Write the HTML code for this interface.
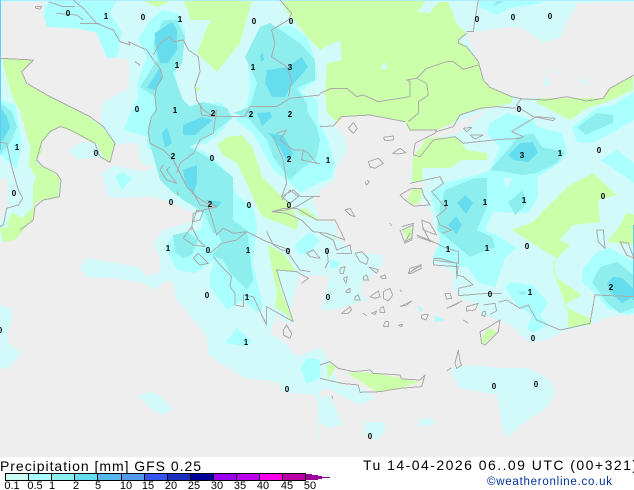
<!DOCTYPE html>
<html><head><meta charset="utf-8"><title>Precipitation</title>
<style>html,body{margin:0;padding:0;background:#fff;width:634px;height:490px;overflow:hidden}svg{display:block}
.c polyline{fill:none;stroke:#aaa;stroke-width:3;stroke-linejoin:round;shape-rendering:crispEdges}
.l text{font:bold 8px "Liberation Sans",sans-serif;fill:#000;text-anchor:middle}
.b text{font:11px "Liberation Sans",sans-serif;fill:#000;text-anchor:middle}
</style></head><body>
<svg width="634" height="490" viewBox="0 0 634 490" xmlns="http://www.w3.org/2000/svg">
<rect width="634" height="490" fill="#fff"/>
<g shape-rendering="crispEdges">
<rect width="634" height="457" fill="#d2fafa"/>
<g fill="#eeeeee">
<polygon points="2,2 43,2 46,27 95,30 103,52 117,58 129,60 129,88 102,103 100,125 87,116 50,97 27,83 22,72 33,60 2,58"/>
<polygon points="0,180 7,178 8,205 0,223"/>
<polygon points="60,127 70,130 93,143 97,157 110,162 115,145 137,142 140,162 153,167 143,172 115,165 102,173 107,195 117,198 137,197 150,196 170,202 192,212 192,222 163,230 153,243 160,258 160,272 147,277 138,267 88,258 80,267 87,277 113,278 143,283 155,290 167,280 173,283 175,297 200,328 207,338 208,355 240,375 247,379 263,380 277,382 283,392 317,395 320,457 0,457 0,242 13,240 23,227 33,220 35,202 50,198 60,198 62,180 45,168 37,158 42,140"/>
<polygon points="466,33 507,27 523,28 543,43 560,38 568,20 578,3 634,2 634,75 610,88 603,98 523,98 512,97 487,87 477,60"/>
<polygon points="634,457 320,457 320,392 327,388 345,398 360,405 375,398 360,387 340,385 327,358 320,347 297,357 287,345 270,332 277,313 280,320 295,325 290,310 300,275 330,276 327,287 322,307 323,311 340,308 368,300 360,292 363,282 383,265 382,255 355,252 337,238 335,223 320,220 313,200 320,190 335,180 335,170 347,150 345,137 335,125 342,117 370,115 407,122 408,130 437,130 463,120 490,108 470,125 455,135 445,135 430,140 413,157 410,183 427,182 420,197 432,213 433,225 440,238 433,258 430,262 453,272 453,288 460,298 477,305 483,315 500,320 513,327 520,335 530,342 547,340 567,330 590,325 607,317 634,315"/>
</g>
<g fill="#d2fafa">
<polygon points="68,150 80,142 93,143 97,158 77,159"/>
<polygon points="138,395 152,392 163,398 173,410 162,415 148,407"/>
<polygon points="0,305 10,308 13,318 7,335 7,342 22,353 8,369 0,368"/>
<polygon points="320,398 330,395 342,425 327,428 320,422"/>
<polygon points="365,422 383,422 386,433 375,440 365,433"/>
<polygon points="418,420 433,418 435,425 420,426"/>
<polygon points="450,372 460,388 497,395 502,428 508,437 520,425 547,408 555,392 550,380 527,368 500,368 467,365 452,368"/>
<polygon points="545,75 550,85 543,87"/><polygon points="583,80 590,83 585,85"/>
<polygon points="553,70 560,72 555,74"/><polygon points="578,80 583,78 585,84"/>
</g>
<g fill="#ccffaa">
<polygon points="3,58 33,60 22,72 27,83 50,97 77,110 100,125 115,143 110,162 103,157 97,143 93,143 68,130 60,127 50,133 42,143 42,153 36,158 38,165 48,168 60,178 58,198 35,202 33,220 23,227 13,238 15,240 7,223 12,212 22,218 33,207 33,187 36,178 29,165 30,147 20,110 15,102 10,90 3,63"/>
<polygon points="0,228 28,225 15,240 3,242"/>
<polygon points="183,0 252,0 240,43 217,72 197,53 207,27 212,20 190,20 188,10"/>
<polygon points="143,0 173,0 157,7"/>
<polygon points="282,0 427,0 417,12 430,13 438,2 448,2 453,13 457,25 467,33 458,40 467,47 477,60 483,80 490,87 512,97 512,103 493,107 463,113 453,123 437,130 410,131 405,122 370,115 342,117 337,123 327,113 325,93 327,63 342,60 340,40 330,50 320,50 307,37 297,23 287,13"/>
<polygon points="537,98 603,98 610,88 633,75 633,90 607,102 587,108 570,120 557,113 537,103"/>
<polygon points="443,137 427,138 413,157 412,182 423,180 422,168 450,168 462,160 487,160 487,153 467,150 457,138"/>
<polygon points="407,200 413,188 422,188 420,203 412,205"/>
<polygon points="402,230 413,227 413,235 408,240"/>
<polygon points="512,230 533,222 547,207 567,187 593,173 617,195 598,200 600,222 573,225 560,240 570,245 553,263 557,278 582,295 563,305 577,313 590,318 592,325 568,327 568,312 560,290 553,270 557,258 540,248 520,235"/>
<polygon points="627,212 634,215 634,245 607,242 620,225"/>
<polygon points="488,328 497,332 483,345 482,338"/>
<polygon points="347,373 377,392 400,388 420,382 400,378 373,373 360,372"/>
<polygon points="327,365 337,365 328,380"/>
<polygon points="217,145 227,137 242,135 253,148 258,163 262,177 280,195 290,205 298,220 297,230 280,223 263,217 257,207 250,190 237,163 223,155"/>
<polygon points="297,210 305,208 320,220 308,217 300,215"/>
<polygon points="268,245 278,250 285,255 297,272 278,270 280,287 293,322 285,313 275,307 277,293 272,270"/>
<polygon points="333,235 338,242 335,240"/>
<polygon points="195,87 201,88 197,92"/>
</g>
<polygon points="385,62 380,69 388,69" fill="#d2fafa"/>
<polygon points="327,46 340,40 342,60 327,63 320,50" fill="#d2fafa"/>
<g fill="#aaffff">
<polygon points="50,0 117,0 110,13 122,32 117,57 107,58 97,33 77,28 47,27 43,13"/>
<polygon points="0,100 15,105 22,143 17,170 12,165 0,155"/>
<polygon points="162,10 178,13 185,30 185,43 175,73 183,107 202,103 220,102 233,117 220,133 207,143 190,145 213,157 232,177 235,193 243,200 253,207 257,225 256,233 253,263 263,307 257,313 243,300 227,310 210,287 210,273 215,260 195,273 177,270 165,248 172,236 185,232 200,230 203,220 200,208 178,193 163,180 170,167 147,147 147,137 123,130 138,97 137,83 147,57 138,40 150,20"/>
<polygon points="268,28 290,25 307,37 315,60 317,80 300,92 318,100 318,125 320,123 328,140 335,165 332,178 320,182 300,193 287,180 273,170 253,133 235,120 247,105 250,90 247,53 263,33"/>
<polygon points="490,123 507,113 533,120 537,127 562,133 567,153 560,163 538,177 538,197 528,213 493,212 485,230 497,235 517,248 505,258 495,287 480,283 467,267 457,267 433,258 440,242 437,225 437,217 430,193 443,183 477,175 490,170 500,147 487,133"/>
<polygon points="572,127 577,142 593,143 613,132 634,120 634,92 613,105 597,108"/>
<polygon points="600,160 617,150 634,163 634,183 620,173"/>
<polygon points="505,288 510,282 533,285 548,303 540,315 548,325 533,333 527,328 532,315 517,305"/>
<polygon points="583,268 582,282 597,295 607,308 627,315 634,313 634,262 610,248 597,252"/>
<polygon points="330,260 340,262 337,268 330,268"/>
<polygon points="300,240 310,232 320,240 307,255 297,253 295,245"/>
<polygon points="225,343 237,328 253,342 247,346"/>
<polygon points="115,177 123,172 132,178 122,190"/>
<polygon points="300,368 308,358 320,360 320,378 307,384"/>
<polygon points="478,0 480,7 497,15 510,8 533,5 543,2 543,0"/>
<polygon points="418,305 423,310 420,312"/><polygon points="435,315 445,320 435,322"/>
</g>
<g fill="#8eeeee">
<polygon points="140,87 157,60 153,43 163,20 177,20 185,37 182,63 173,73 183,100 190,107 203,102 227,108 232,118 213,133 190,147 207,157 233,177 233,220 247,230 248,237 253,280 247,290 230,273 223,260 212,255 222,243 217,233 213,233 205,213 183,200 170,190 160,180 147,133 155,110 155,97"/>
<polygon points="173,235 187,232 198,240 192,255 183,258 175,252"/>
<polygon points="245,57 260,27 270,23 300,43 315,60 315,80 297,88 307,103 308,113 317,127 320,140 317,157 300,170 290,180 273,157 267,140 248,118 233,113 250,107 257,83"/>
<polygon points="490,170 510,147 517,137 533,133 542,147 565,152 557,163 537,173 522,175 505,172"/>
<polygon points="445,190 475,178 487,178 487,207 477,230 492,237 495,247 470,257 453,243 437,230 440,207"/>
<polygon points="508,202 523,190 527,203 515,215"/>
<polygon points="577,127 597,113 613,115 613,123 585,135"/>
<polygon points="0,102 12,112 17,127 10,143 0,155"/>
<polygon points="592,282 600,267 617,262 634,275 634,308 620,313 607,303"/>
<polygon points="492,7 497,0 507,0"/>
<polygon points="517,292 527,291 523,295"/>
</g>
<polygon points="300,172 312,172 307,178" fill="#aaffff"/>
<polygon points="503,178 513,178 507,188" fill="#d2fafa"/>
<g fill="#66ddee">
<polygon points="155,33 172,22 177,30 177,50 168,63 160,63 155,43"/>
<polygon points="147,88 160,67 162,80 155,90"/>
<polygon points="183,125 202,117 213,120 203,128 195,135 183,135"/>
<polygon points="162,133 167,127 172,143 165,148"/>
<polygon points="183,170 197,165 197,182 193,195 185,182"/>
<polygon points="208,200 222,202 217,208"/>
<polygon points="0,107 7,117 10,127 3,140 0,142"/>
<polygon points="267,70 287,67 302,57 308,67 290,88 285,97 272,97 265,83"/>
<polygon points="260,55 263,52 264,60 261,62"/>
<polygon points="257,113 270,112 272,117 262,126"/>
<polygon points="268,133 283,135 293,153 288,163 277,143"/>
<polygon points="508,155 520,143 533,142 538,153 528,162 513,160"/>
<polygon points="457,203 465,195 473,203 466,214"/>
<polygon points="448,225 456,216 462,225 456,234"/>
<polygon points="607,283 613,277 622,278 633,288 633,297 622,303 610,292"/>
</g>
<rect x="0" y="0" width="634" height="1" fill="#aaeeff"/>
<rect x="0" y="0" width="1" height="150" fill="#66ccee"/>
<rect x="633" y="225" width="1" height="75" fill="#66ccee"/>
</g>
<g class="c">
<g transform="scale(.3333)">
<polyline points="0,175 100,180 65,215 80,250 150,290 270,350 310,380 345,430 330,487 300,470 285,430 240,405 200,385 180,380 150,395 125,425 110,480 130,500 170,520 183,540 178,590 130,600 105,620 100,660 60,690"/>
<polyline points="220,0 250,25 290,70 340,90 360,125 390,135 385,125 440,150 460,180 480,205 488,230 470,260 465,290 470,330 455,350 445,390 450,430 490,450 520,480 540,520 560,560 590,590 620,610 650,620"/>
<polyline points="460,165 480,130 510,110 520,125 550,120 565,150 595,170 600,215 585,260 590,300 610,330 640,350 680,350 735,350 750,320 830,320 870,295 960,285"/>
<polyline points="840,0 875,40 865,60 815,90 825,130 815,170 860,200 875,240 865,290"/>
<polyline points="145,5 190,20 225,20"/><polyline points="170,40 230,45 250,60"/><polyline points="240,70 300,70"/><polyline points="105,20 125,20 120,27 108,25 105,20"/>
<polyline points="600,310 605,345 640,350 650,330 640,400 600,420 580,460 540,490 530,520"/>
<polyline points="830,400 860,390 840,420 880,450 910,450 925,460 950,490 960,490"/>
<polyline points="910,450 905,480 950,490"/>
<polyline points="820,410 850,480 860,550 845,590 880,570 900,590 960,590"/>
<polyline points="815,635 860,630 890,620 940,590"/>
<polyline points="490,495 480,510 500,540 530,550 500,510 510,500"/>
<polyline points="575,690 580,640 610,630 650,620 620,600"/>
<polyline points="405,185 420,195"/><polyline points="530,575 535,585"/>
</g>
<g transform="translate(0,110) scale(.3333)">
<polyline points="0,97 20,100 35,170 55,240 68,265 55,285 20,295 10,345 0,350"/>
</g>
<g transform="translate(150,190) scale(.3333)">
<polyline points="125,0 150,45 175,50 190,100 200,135 220,115 250,130 290,125 350,155 420,180 415,190 450,240 480,245"/>
<polyline points="180,190 215,160 260,150 290,125"/>
<polyline points="190,200 215,230 245,260 240,290 255,310 255,345 280,350 280,315 310,320 335,375 350,405 350,350 385,370 430,395 395,290 380,240 440,245 475,265 455,280"/>
<polyline points="130,95 140,60 160,65 150,90 130,95"/>
<polyline points="100,145 125,110 145,150 165,170 130,165 100,145"/>
<polyline points="130,205 145,190 175,220 150,225 130,205"/>
<polyline points="365,65 400,55 440,55 500,90 555,90 585,150 530,130 490,125 455,90 410,70 365,65"/>
<polyline points="350,125 370,165 395,180 420,185"/>
<polyline points="395,30 420,0 445,20 420,40 395,20"/>
<polyline points="470,190 490,180 510,205 480,200 470,190"/>
<polyline points="400,420 410,405 425,430 420,445 400,435 400,420"/>
</g>
<g transform="translate(320,225) scale(.3333)">
<polyline points="105,85 125,80 145,100 140,118 120,110 105,85"/><polyline points="145,125 175,135 170,145 145,125"/><polyline points="265,145 300,120 305,130 275,145 265,145"/>
<polyline points="60,130 75,125 70,145 60,145 60,130"/><polyline points="70,160 82,155 78,175 70,160"/><polyline points="80,195 90,190 90,203 78,203 80,195"/>
<polyline points="105,215 115,210 120,225 105,225 105,215"/><polyline points="130,155 140,150 145,165 130,165 130,155"/><polyline points="180,155 195,150 198,160 185,160 180,155"/>
<polyline points="65,265 90,245 95,255 85,265 65,265"/><polyline points="150,215 175,198 180,215 165,220 150,215"/><polyline points="190,200 210,190 218,210 205,228 190,220 190,200"/>
<polyline points="240,245 275,228 260,240 240,245"/><polyline points="180,250 190,245 195,262 180,262 180,250"/><polyline points="155,265 170,258 165,268 155,265"/><polyline points="128,265 140,272"/>
<polyline points="195,290 205,290 205,305 190,305 195,290"/><polyline points="235,300 248,298 245,305 235,300"/><polyline points="305,270 325,268 318,285 305,280 305,270"/><polyline points="430,285 445,295"/><polyline points="240,195 245,200"/>
<polyline points="375,205 390,205 395,220 380,222 375,205"/><polyline points="380,250 425,228 405,240 380,250"/><polyline points="440,245 475,235 465,255 440,258 440,245"/>
<polyline points="490,258 497,260 495,275 485,270 490,258"/><polyline points="490,240 525,235 530,258 510,268"/>
<polyline points="535,232 560,225 600,250 625,240 650,285 720,315 745,310 810,295 825,210 942,215"/>
<polyline points="415,190 415,212 500,205 545,205"/>
<polyline points="480,320 500,310 540,285 535,320 495,360 485,355 480,320"/>
<polyline points="405,415 415,375 420,410 425,420 410,430 405,415"/><polyline points="380,438 395,428"/>
<polyline points="0,420 30,410 55,430 100,440 150,435 160,445 240,450 245,462 300,465 315,450 305,485 240,490 180,500 120,502 115,480 65,475 0,460"/>
<polyline points="35,512 38,520"/>
<polyline points="0,25 40,45 50,75 90,60 95,85 50,85"/><polyline points="20,70 25,110 15,130"/>
<polyline points="245,15 280,0 275,40 255,50 270,25"/><polyline points="310,10 330,50"/><polyline points="290,30 340,50"/>
<polyline points="340,100 360,100 410,115 410,150 430,155 460,180 415,190"/>
<polyline points="830,15 850,15 855,70 835,50 830,15"/><polyline points="900,50 925,55 942,100 920,90 900,50"/>
</g>
<g transform="translate(320,0) scale(.3333)">
<polyline points="260,370 270,390 350,390 345,400 285,430 280,465 300,470 340,420 405,410 430,430 520,420 600,415 610,410 575,395 590,385 650,350 705,355 700,362 640,350 600,325 590,315 605,295"/>
<polyline points="350,395 400,380 420,345 480,325 530,320 590,325"/>
<polyline points="440,95 460,95 465,60 475,0"/>
<polyline points="440,100 415,120 415,130 440,140 475,185 490,240 510,262 575,290 610,297 680,300 740,290 800,303 850,295 870,265 942,225"/>
<polyline points="0,280 35,265 80,265 110,290 130,285 175,305 270,290 270,245 260,240 290,235 320,205 380,185 400,185 430,208 475,195"/>
<polyline points="290,235 320,250 325,285 295,305 295,340 265,365"/>
<polyline points="0,380 40,378 65,350 150,345 255,365"/>
<polyline points="85,385 100,368 112,385 100,400 85,385"/>
<polyline points="190,412 220,408 220,420 195,422 190,412"/>
<polyline points="218,460 240,445 258,458 235,462 218,460"/>
<polyline points="430,385 455,382 440,395 430,385"/><polyline points="450,405 490,405 465,417 450,405"/>
</g>
<g transform="translate(330,120) scale(.3333)">
<polyline points="240,190 330,170 340,190 305,215 335,250 350,265 320,290 330,315 365,330 335,340"/>
<polyline points="210,225 245,205 275,205 280,225 300,255 250,258 225,240 210,225"/>
<polyline points="115,125 145,115 160,130 135,145 120,140 115,125"/>
<polyline points="45,270 60,265 75,290 60,285 45,270"/><polyline points="180,310 185,318"/>
<polyline points="215,320 250,310 245,360 225,370 210,330"/>
<polyline points="260,350 320,370 350,385 385,395 385,430 310,420 310,435 385,440 380,475"/>
<polyline points="275,300 300,310 320,345 280,330 275,300"/>
<polyline points="240,445 275,435 235,460 240,445"/>
<polyline points="110,180 118,185 110,195 105,185"/>
</g>
</g>
<g class="l">
<text x="68" y="16">0</text><text x="106" y="19">1</text><text x="143" y="20">0</text><text x="180" y="22">1</text><text x="254" y="24">0</text><text x="291" y="24">0</text><text x="477" y="22">0</text><text x="513" y="20">0</text><text x="550" y="19">0</text>
<text x="253" y="70">1</text><text x="290" y="70">3</text><text x="177" y="68">1</text><text x="137" y="112">0</text><text x="175" y="113">1</text><text x="213" y="116">2</text><text x="251" y="117">2</text><text x="290" y="117">2</text>
<text x="173" y="159">2</text><text x="212" y="161">0</text><text x="289" y="162">2</text><text x="328" y="163">1</text><text x="17" y="150">1</text><text x="96" y="156">0</text><text x="14" y="196">0</text>
<text x="171" y="205">0</text><text x="210" y="207">2</text><text x="249" y="208">0</text><text x="289" y="208">0</text><text x="168" y="251">1</text><text x="208" y="253">0</text><text x="248" y="253">1</text><text x="288" y="254">0</text><text x="327" y="254">0</text>
<text x="207" y="298">0</text><text x="247" y="300">1</text><text x="328" y="300">0</text><text x="246" y="345">1</text><text x="0" y="333">0</text><text x="287" y="392">0</text><text x="370" y="439">0</text><text x="494" y="389">0</text><text x="536" y="387">0</text><text x="533" y="341">0</text>
<text x="530" y="295">1</text><text x="490" y="297">0</text><text x="611" y="290">2</text><text x="527" y="249">0</text><text x="487" y="251">1</text><text x="448" y="252">1</text><text x="446" y="206">1</text><text x="485" y="205">1</text><text x="524" y="203">1</text><text x="603" y="199">0</text>
<text x="522" y="158">3</text><text x="560" y="156">1</text><text x="599" y="153">0</text><text x="519" y="112">0</text>
</g>
<rect y="457" width="634" height="33" fill="#fff"/>
<text x="0" y="471" font-family="Liberation Sans, sans-serif" font-size="14" textLength="201" lengthAdjust="spacing" xml:space="preserve">Precipitation [mm] GFS 0.25</text>
<text x="363" y="470" font-family="Liberation Sans, sans-serif" font-size="14" textLength="274" lengthAdjust="spacing">Tu 14-04-2026 06..09 UTC (00+321)</text>
<text x="487" y="485" font-family="Liberation Sans, sans-serif" font-size="11.5" fill="#003399" textLength="125" lengthAdjust="spacing">©weatheronline.co.uk</text>
<g shape-rendering="crispEdges">
<rect x="5" y="473" width="23" height="8" fill="#ccfff5"/><rect x="28" y="473" width="23" height="8" fill="#aaffff"/><rect x="51" y="473" width="23" height="8" fill="#88eeee"/><rect x="74" y="473" width="23" height="8" fill="#66ddee"/><rect x="97" y="473" width="24" height="8" fill="#55b8ee"/><rect x="121" y="473" width="23" height="8" fill="#5599ee"/><rect x="144" y="473" width="23" height="8" fill="#3355ee"/><rect x="167" y="473" width="23" height="8" fill="#1c30c0"/><rect x="190" y="473" width="23" height="8" fill="#000099"/><rect x="213" y="473" width="23" height="8" fill="#9900ee"/><rect x="236" y="473" width="23" height="8" fill="#bb00ee"/><rect x="259" y="473" width="23" height="8" fill="#ff00ee"/><rect x="282" y="473" width="23" height="8" fill="#bb00aa"/>
<polygon points="305,474 312,474 312,475 318,475 318,476 322,476 322,477 330,477 330,478 322,478 322,479 318,479 318,480 305,480" fill="#990099"/>
<rect x="5" y="473" width="301" height="1" fill="#000"/><rect x="5" y="480" width="301" height="1" fill="#000"/>
<rect x="5" y="473" width="1" height="8"/><rect x="28" y="473" width="1" height="8"/><rect x="51" y="473" width="1" height="8"/><rect x="74" y="473" width="1" height="8"/><rect x="97" y="473" width="1" height="8"/><rect x="121" y="473" width="1" height="8"/><rect x="144" y="473" width="1" height="8"/><rect x="167" y="473" width="1" height="8"/><rect x="190" y="473" width="1" height="8"/><rect x="213" y="473" width="1" height="8"/><rect x="236" y="473" width="1" height="8"/><rect x="259" y="473" width="1" height="8"/><rect x="282" y="473" width="1" height="8"/><rect x="305" y="473" width="1" height="8"/>
</g>
<g class="b">
<text x="12" y="489">0.1</text><text x="35" y="489">0.5</text><text x="52" y="489">1</text><text x="76" y="489">2</text><text x="98" y="489">5</text><text x="126" y="489">10</text><text x="148" y="489">15</text><text x="171" y="489">20</text><text x="194" y="489">25</text><text x="217" y="489">30</text><text x="240" y="489">35</text><text x="263" y="489">40</text><text x="287" y="489">45</text><text x="310" y="489">50</text>
</g>
</svg>
</body></html>
